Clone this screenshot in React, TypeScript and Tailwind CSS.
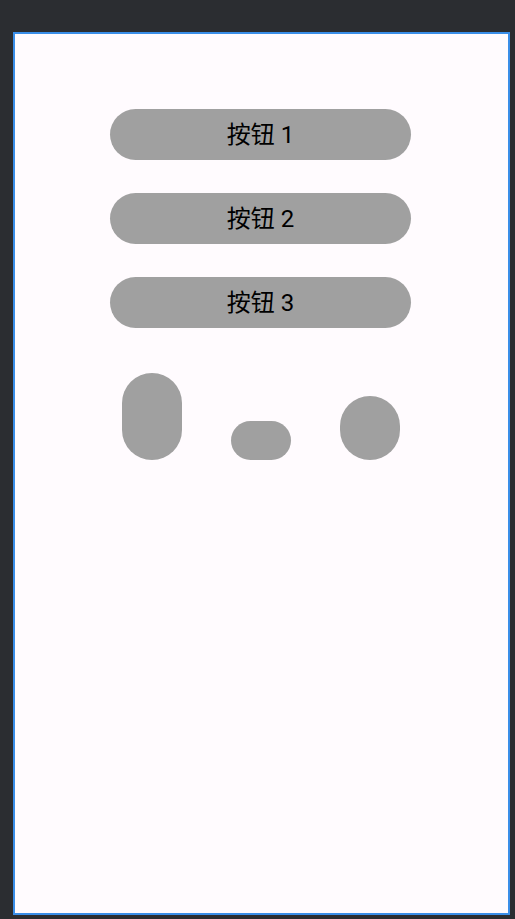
export default function App() {
  const labels = ['按钮 1', '按钮 2', '按钮 3'];

  return (
    <div className="min-h-screen w-[515px] h-[919px] bg-[#2b2d31] pt-[32px] pl-[13px]">
      <div
        className="w-[497px] h-[883px] bg-[#fffbfe] border-2 border-[#3a8ee8] flex flex-col items-center pt-[75px]"
        style={{ fontFamily: 'Roboto, "Noto Sans CJK SC", sans-serif' }}
      >
        <div className="flex flex-col gap-[33px] -ml-[2px]">
          {labels.map((label) => (
            <button
              key={label}
              className="w-[301px] h-[51px] rounded-full bg-[#a0a0a0] text-[24px] text-black flex items-center justify-center"
            >
              {label}
            </button>
          ))}
        </div>

        <div className="flex items-end gap-[49px] mt-[45px] -ml-[2px]">
          <div className="w-[60px] h-[87px] rounded-full bg-[#a0a0a0]" />
          <div className="w-[60px] h-[39px] rounded-full bg-[#a0a0a0]" />
          <div className="w-[60px] h-[64px] rounded-full bg-[#a0a0a0]" />
        </div>
      </div>
    </div>
  );
}
